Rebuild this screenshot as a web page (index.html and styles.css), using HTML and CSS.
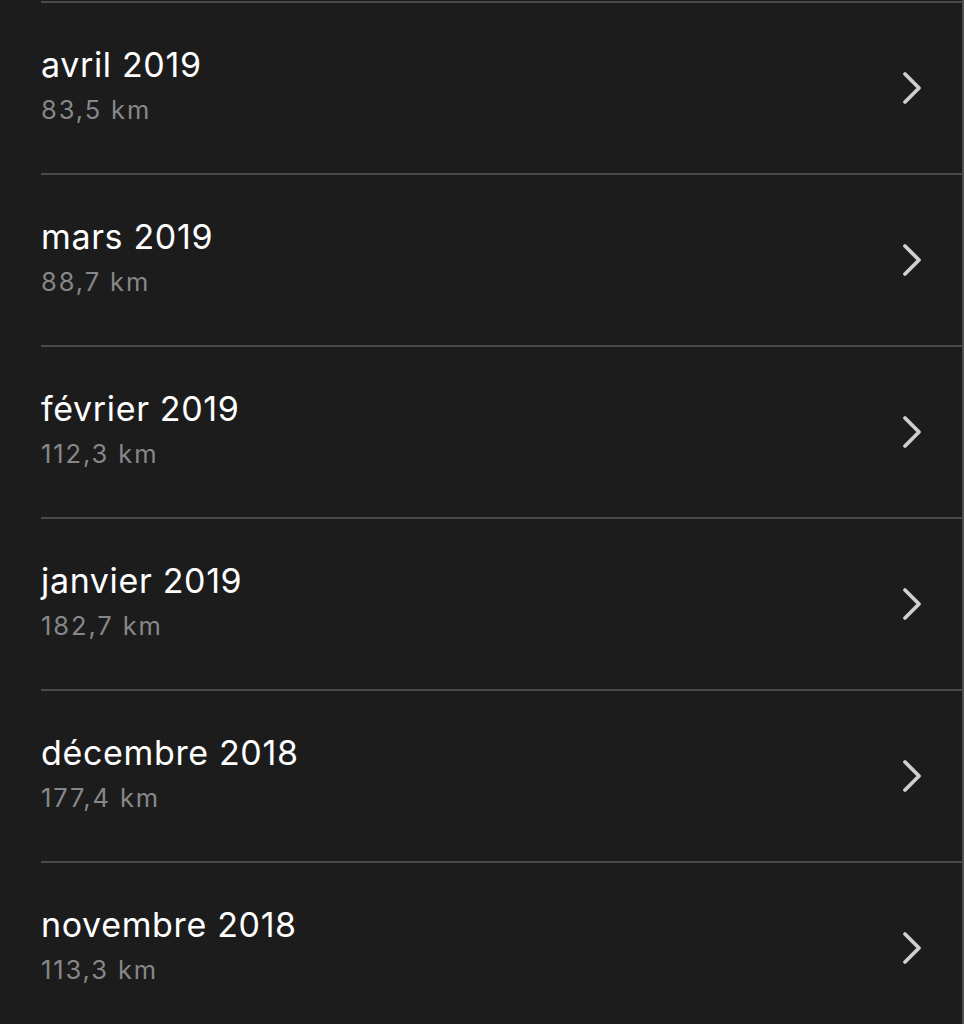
FILE: index.html
```html
<!doctype html>
<html lang="fr">
  <head>
    <meta charset="UTF-8" />
    <meta name="viewport" content="width=device-width, initial-scale=1.0" />
    <title>Historique mensuel</title>
    <link rel="stylesheet" href="styles.css">
  </head>
  <body>
    <!-- Monthly distance list -->
    <ul class="month-list">
      <li class="month-row">
        <div class="month-text">
          <span class="month-title">avril 2019</span>
          <span class="month-distance">83,5 km</span>
        </div>
        <svg class="chevron" viewBox="0 0 20 34" aria-hidden="true"><path d="M3 3 L17 17 L3 31" /></svg>
      </li>
      <li class="month-row">
        <div class="month-text">
          <span class="month-title">mars 2019</span>
          <span class="month-distance">88,7 km</span>
        </div>
        <svg class="chevron" viewBox="0 0 20 34" aria-hidden="true"><path d="M3 3 L17 17 L3 31" /></svg>
      </li>
      <li class="month-row">
        <div class="month-text">
          <span class="month-title">février 2019</span>
          <span class="month-distance">112,3 km</span>
        </div>
        <svg class="chevron" viewBox="0 0 20 34" aria-hidden="true"><path d="M3 3 L17 17 L3 31" /></svg>
      </li>
      <li class="month-row">
        <div class="month-text">
          <span class="month-title">janvier 2019</span>
          <span class="month-distance">182,7 km</span>
        </div>
        <svg class="chevron" viewBox="0 0 20 34" aria-hidden="true"><path d="M3 3 L17 17 L3 31" /></svg>
      </li>
      <li class="month-row">
        <div class="month-text">
          <span class="month-title">décembre 2018</span>
          <span class="month-distance">177,4 km</span>
        </div>
        <svg class="chevron" viewBox="0 0 20 34" aria-hidden="true"><path d="M3 3 L17 17 L3 31" /></svg>
      </li>
      <li class="month-row">
        <div class="month-text">
          <span class="month-title">novembre 2018</span>
          <span class="month-distance">113,3 km</span>
        </div>
        <svg class="chevron" viewBox="0 0 20 34" aria-hidden="true"><path d="M3 3 L17 17 L3 31" /></svg>
      </li>
    </ul>
  </body>
</html>
```

FILE: styles.css
```css
/* Base */
html, body {
  margin: 0;
  height: 100%;
  background: #1c1c1c;
}

body {
  font-family: Inter, "Liberation Sans", sans-serif;
  -webkit-font-smoothing: antialiased;
  overflow: hidden;
}

/* List */
.month-list {
  list-style: none;
  margin: 0;
  padding: 1px 0 0 0;
  min-height: 100%;
  box-sizing: border-box;
  border-right: 2px solid #4f4f4f;
}

.month-row {
  display: flex;
  align-items: center;
  justify-content: space-between;
  height: 170px;
  margin-left: 41px;
  padding-right: 40px;
  border-top: 2px solid #4a4a4a;
}

.month-text {
  display: flex;
  flex-direction: column;
  gap: 10px;
  padding-bottom: 6px;
}

.month-title {
  color: #ffffff;
  font-size: 34px;
  line-height: 40px;
  letter-spacing: 0.65px;
}

.month-distance {
  color: #87878a;
  font-size: 25.5px;
  line-height: 30px;
  letter-spacing: 1.9px;
}

.chevron {
  width: 20px;
  height: 34px;
  fill: none;
  stroke: #cfcfcf;
  stroke-width: 3.8;
  stroke-linecap: round;
  stroke-linejoin: round;
}
```
